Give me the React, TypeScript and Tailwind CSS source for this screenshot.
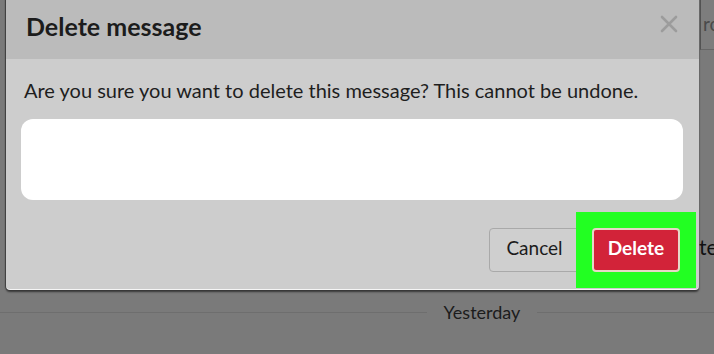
import React from "react";

const font = { fontFamily: "Lato, 'Open Sans', sans-serif" };

export default function App() {
  return (
    <div
      className="relative w-[714px] h-[354px] overflow-hidden bg-[#7a7a7a]"
      style={font}
    >
      {/* background app content */}
      <div className="absolute left-[700px] top-0 w-[14px] h-[50px] border-l border-[#555] border-b border-b-[#666] bg-[#7d7d7d]">
        <span className="absolute left-[2px] top-[14px] text-[19px] leading-none text-[#4a4a4a]">
          ro
        </span>
      </div>
      <span className="absolute left-[699px] top-[236px] text-[21px] leading-none text-[#111]">
        te
      </span>
      <div className="absolute left-0 top-[301px] w-full flex items-center">
        <div className="h-px w-[427px] bg-[#6e6e6e]" />
        <span className="w-[110px] text-center text-[18px] leading-[22px] text-[#1c1c1c]">
          Yesterday
        </span>
        <div className="h-px flex-1 bg-[#6e6e6e]" />
      </div>

      {/* modal */}
      <div className="absolute left-[6px] top-[-6px] w-[693px] h-[296px] rounded-[4px] overflow-hidden bg-[#cdcdcd] shadow-[0_2px_2px_rgba(0,0,0,0.55),-1px_0_1px_rgba(0,0,0,0.4)] border-b border-white/80 flex flex-col">
        <div className="h-[65px] shrink-0 bg-[#bbbbbb] flex items-start justify-between pl-[20px] pr-[20px]">
          <h1 className="mt-[17px] text-[25px] leading-[30px] font-bold text-[#1c1c1c]">
            Delete message
          </h1>
          <svg
            width="18"
            height="18"
            viewBox="0 0 18 18"
            className="mt-[21px] mr-[1px]"
          >
            <path
              d="M2 2 L16 16 M16 2 L2 16"
              stroke="#9c9c9c"
              strokeWidth="2.6"
              strokeLinecap="round"
            />
          </svg>
        </div>
        <div className="flex flex-col pl-[15px] pr-[16px]">
          <p className="pl-[3px] pt-[18px] text-[20px] leading-[26px] text-[#1e1e1e]">
            Are you sure you want to delete this message? This cannot be undone.
          </p>
          <div className="mt-[16px] h-[81px] rounded-[12px] bg-white" />
          <div className="mt-[28px] flex justify-end gap-[12px] pr-[1px]">
            <button className="w-[91px] h-[44px] pb-[3px] rounded-[4px] border border-[#a9a9a9] bg-[#cfcfcf] text-[19px] text-[#1c1c1c]">
              Cancel
            </button>
            <button className="w-[90px] h-[44px] pb-[3px] rounded-[4px] border-2 border-[#e8d6c8] bg-[#d22339] text-[19px] font-bold text-white">
              Delete
            </button>
          </div>
        </div>
      </div>

      {/* highlight annotation */}
      <div className="absolute left-[576px] top-[212px] w-[120px] h-[76px] bg-[#22ff22] p-[16px] flex items-center justify-center">
        <div className="w-[90px] h-[44px] pb-[3px] rounded-[4px] border-2 border-[#e8d6c8] bg-[#d22339] text-[19px] font-bold text-white flex items-center justify-center">
          Delete
        </div>
      </div>
    </div>
  );
}
